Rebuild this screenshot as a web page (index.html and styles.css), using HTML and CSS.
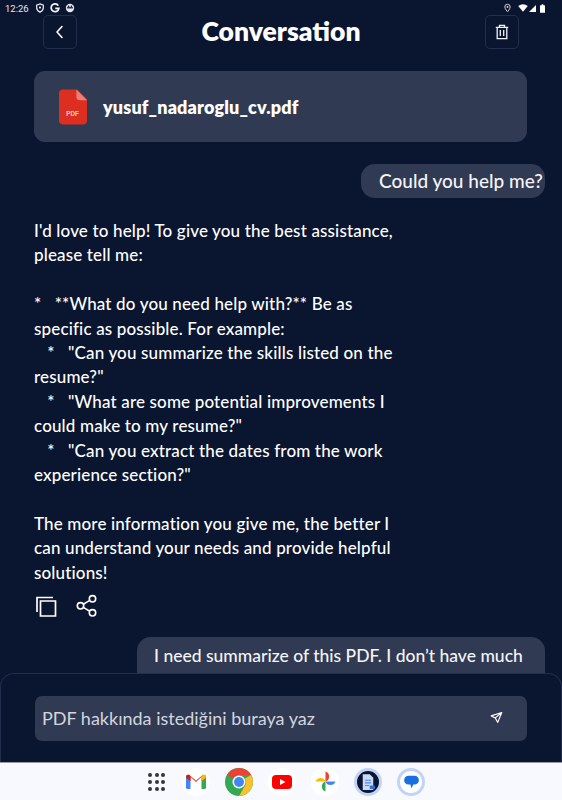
FILE: index.html
```html
<!DOCTYPE html>
<html lang="en">
<head>
  <meta charset="UTF-8" />
  <meta name="viewport" content="width=device-width, initial-scale=1.0" />
  <title>Conversation</title>
  <link rel="stylesheet" href="styles.css">
</head>
<body>
  <div class="app">
    <div class="status-bar">
      <div class="status-left">
        <span class="clock">12:26</span>
        <svg class="status-icon" viewBox="0 0 12 12"><path d="M6 1l4 1.500v3.200c0 2.400-1.700 4-4 5.300-2.300-1.300-4-2.900-4-5.300V2.500z" fill="none" stroke="#e6e8ee" stroke-width="1.500"/><circle cx="6" cy="5.500" r="1.300" fill="#e6e8ee"/></svg>
        <svg class="status-icon" viewBox="0 0 12 12"><path d="M10 3.100A4.700 4.700 0 1 0 10.700 6.500H6.300" fill="none" stroke="#f2f3f6" stroke-width="2"/></svg>
        <svg class="status-icon" viewBox="0 0 12 12"><circle cx="6" cy="6" r="5" fill="#e6e8ee"/><path d="M2.500 5h7v1.500h-7z" fill="#0a1530"/><circle cx="4.300" cy="4" r="1" fill="#0a1530"/><circle cx="7.700" cy="4" r="1" fill="#0a1530"/></svg>
      </div>
      <div class="status-right">
        <svg class="status-pin" viewBox="0 0 12 12"><path d="M6 1a3.600 3.600 0 0 1 3.600 3.600C9.600 7 6 11 6 11S2.400 7 2.400 4.600A3.600 3.600 0 0 1 6 1z" fill="none" stroke="#e6e8ee" stroke-width="1.200"/><circle cx="6" cy="4.600" r="1.200" fill="#e6e8ee"/></svg>
        <svg class="wifi" viewBox="0 0 12 10"><path d="M0 2.500Q6-2 12 2.500L6 9.800z" fill="#fff"/></svg>
        <svg class="signal" viewBox="0 0 9 9"><path d="M9 0v9H0z" fill="#fff"/></svg>
        <svg class="battery" viewBox="0 0 6 10"><path d="M2 0h2v1h1.200q.8 0 .8.800V10H0V1.800Q0 1 .8 1H2z" fill="#fff"/></svg>
      </div>
    </div>

    <header class="top-bar">
      <button class="icon-btn">
        <svg width="16" height="16" viewBox="0 0 16 16"><path d="M10 2.500L5 8l5 5.500" fill="none" stroke="#fff" stroke-width="1.600" stroke-linecap="round" stroke-linejoin="round"/></svg>
      </button>
      <h1>Conversation</h1>
      <button class="icon-btn">
        <svg width="16" height="16" viewBox="0 0 16 16"><path d="M1.800 3.300h12.400M5.500 3V1.300h5V3M3.200 3.300v11.400h9.600V3.300M6.300 6v6M9.700 6v6" fill="none" stroke="#f2f3f6" stroke-width="1.300"/></svg>
      </button>
    </header>

    <main class="chat">
      <div class="file-card">
        <svg class="pdf-icon" width="28" height="36" viewBox="0 0 29 36">
          <path d="M4 0h15l10 10v22a4 4 0 0 1-4 4H4a4 4 0 0 1-4-4V4a4 4 0 0 1 4-4z" fill="#dc2f22"/>
          <path d="M18 0l11 11h-7a4 4 0 0 1-4-4z" fill="#ec7f76"/>
          <text x="14" y="27" text-anchor="middle" class="pdf-label">PDF</text>
        </svg>
        <span class="file-name">yusuf_nadaroglu_cv.pdf</span>
      </div>

      <div class="bubble bubble-short">Could you help me?</div>

      <div class="reply">
        <p>I'd love to help! To give you the best assistance,<br>please tell me:</p>
        <p>*&nbsp;&nbsp;&nbsp;**What do you need help with?** Be as<br>specific as possible. For example:<br>&nbsp;&nbsp;&nbsp;*&nbsp;&nbsp;&nbsp;"Can you summarize the skills listed on the<br>resume?"<br>&nbsp;&nbsp;&nbsp;*&nbsp;&nbsp;&nbsp;"What are some potential improvements I<br>could make to my resume?"<br>&nbsp;&nbsp;&nbsp;*&nbsp;&nbsp;&nbsp;"Can you extract the dates from the work<br>experience section?"</p>
        <p>The more information you give me, the better I<br>can understand your needs and provide helpful<br>solutions!</p>
      </div>

      <div class="reply-actions">
        <svg width="24" height="24" viewBox="0 0 24 24"><path d="M3 18V3.500h16M6.500 7h15v15h-15z" fill="none" stroke="#fff" stroke-width="1.700"/></svg>
        <svg width="22" height="24" viewBox="0 0 22 24"><g fill="none" stroke="#fff" stroke-width="1.600"><circle cx="16.500" cy="4.800" r="3.200"/><circle cx="16.500" cy="18.800" r="3.200"/><circle cx="4.500" cy="11.800" r="3.200"/><path d="M7.300 10.200l6.500-3.800M7.300 13.400l6.500 3.800"/></g></svg>
      </div>

      <div class="bubble bubble-long">I need summarize of this PDF. I don’t have much</div>
    </main>

    <section class="composer">
      <div class="composer-input">
        <span class="placeholder">PDF hakkında istediğini buraya yaz</span>
        <svg width="13" height="13" viewBox="0 0 16 16"><path d="M14.500 1.800L1.500 6l5 2.500 3 5.500zM14.500 1.800L6.500 8.500" fill="none" stroke="#fff" stroke-width="1.400" stroke-linejoin="round"/></svg>
      </div>
    </section>

    <nav class="dock">
      <div class="apps-grid">
        <i></i><i></i><i></i><i></i><i></i><i></i><i></i><i></i><i></i>
      </div>
      <div class="dock-app">
        <svg width="20" height="15" viewBox="0 0 20 15">
          <path d="M0 3v10.500Q0 15 1.500 15H4.500V6.500z" fill="#4285f4"/>
          <path d="M20 3v10.500Q20 15 18.500 15H15.500V6.500z" fill="#34a853"/>
          <path d="M0 3.500Q0 0 3 .8L4.500 2 10 6.500 15.500 2 17 .8Q20 0 20 3.500L15.500 7V3L10 8 4.500 3V7z" fill="#ea4335"/>
          <path d="M15.500 2L17 .8Q20 0 20 3.500L15.500 7z" fill="#fbbc04"/>
          <path d="M0 3.500Q0 0 3 .8L4.500 2V7z" fill="#c5221f"/>
        </svg>
      </div>
      <svg class="chrome" width="28" height="28" viewBox="0 0 28 28">
        <circle cx="14" cy="14" r="14" fill="#34a853"/>
        <path d="M14 0a14 14 0 0 1 12.100 7H14a7 7 0 0 0-6.100 3.500L1.900 7A14 14 0 0 1 14 0z" fill="#ea4335"/>
        <path d="M26.100 7A14 14 0 0 1 14 28l6.100-10.500A7 7 0 0 0 20 10.500z" fill="#fbc02d"/>
        <circle cx="14" cy="14" r="6.500" fill="#fff"/>
        <circle cx="14" cy="14" r="5" fill="#4285f4"/>
      </svg>
      <div class="dock-app">
        <svg width="20" height="14" viewBox="0 0 20 14"><rect width="20" height="14" rx="4" fill="#f00"/><path d="M8 4l5.500 3L8 10z" fill="#fff"/></svg>
      </div>
      <div class="dock-app">
        <svg width="21" height="23" viewBox="0 0 20 22">
          <path d="M10 11V1.500a5 5 0 0 1 0 9.500z" fill="#ea4335"/>
          <path d="M10 11h9.500a5 5 0 0 1-9.500 0z" fill="#4285f4"/>
          <path d="M10 11v9.500a5 5 0 0 1 0-9.500z" fill="#34a853"/>
          <path d="M10 11H.500a5 5 0 0 1 9.500 0z" fill="#fbbc04"/>
        </svg>
      </div>
      <div class="dock-app dock-app-ring dock-app-dark">
        <svg width="14" height="18" viewBox="0 0 16 20">
          <path d="M2 1h8l4 4v14H2z" fill="#c9d9f8"/>
          <path d="M4.500 8h7M4.500 11h7M4.500 14h5" stroke="#5a87d8" stroke-width="1.200"/>
          <rect x="10" y="14" width="6" height="4" rx="1" fill="#2f6fe0"/>
        </svg>
      </div>
      <div class="dock-app dock-app-ring">
        <svg width="15" height="14" viewBox="0 0 20 19"><path d="M6 1h8a6 6 0 0 1 0 12h-1.500L10 18l-1.500-5H6A6 6 0 0 1 6 1z" fill="#1a6fe0"/></svg>
      </div>
    </nav>
  </div>
</body>
</html>
```
FILE: styles.css
```css
* {
  margin: 0;
  padding: 0;
  box-sizing: border-box;
}

html, body {
  height: 100%;
  overflow: hidden;
}

body {
  font-family: 'Lato', 'Noto Sans', sans-serif;
  background: #0a1530;
  color: #fff;
}

.app {
  height: 800px;
  display: flex;
  flex-direction: column;
}

/* Status bar */
.status-bar {
  height: 15px;
  padding: 1px 17px 0 5px;
  display: flex;
  justify-content: space-between;
  align-items: center;
  flex-shrink: 0;
}

.status-left, .status-right {
  display: flex;
  align-items: center;
}

.status-left {
  gap: 5px;
}

.status-right {
  gap: 3px;
}

.clock {
  font-family: 'Roboto', sans-serif;
  font-size: 9.5px;
  color: #e6e8ee;
  margin-right: 1px;
}

.status-icon {
  width: 10px;
  height: 10px;
}

.status-pin {
  width: 9px;
  height: 10px;
}

.wifi {
  width: 10px;
  height: 8px;
  margin-left: 3px;
}

.signal {
  width: 7px;
  height: 7px;
  margin-left: -2px;
}

.battery {
  width: 5px;
  height: 9px;
  margin-left: 1px;
}

/* Top bar */
.top-bar {
  height: 34px;
  margin: 0 43px;
  display: flex;
  justify-content: space-between;
  align-items: center;
  flex-shrink: 0;
}

.icon-btn {
  width: 34px;
  height: 34px;
  background: transparent;
  border: 1px solid #232e4d;
  border-radius: 5px;
  display: flex;
  align-items: center;
  justify-content: center;
}

.top-bar h1 {
  font-size: 26.5px;
  font-weight: 800;
  color: #fff;
  padding-bottom: 2px;
}

/* Chat */
.chat {
  flex: 1;
  overflow: hidden;
  padding: 22px 17px 0 34px;
  display: flex;
  flex-direction: column;
  align-items: flex-start;
}

.file-card {
  width: 493px;
  height: 71px;
  background: #313a53;
  border-radius: 11px;
  padding-left: 25px;
  display: flex;
  align-items: center;
  gap: 16px;
  flex-shrink: 0;
}

.pdf-label {
  font-family: 'Liberation Sans', sans-serif;
  font-size: 6.5px;
  font-weight: 700;
  fill: #f6cfcb;
}

.file-name {
  font-size: 18px;
  font-weight: 800;
  letter-spacing: 0.15px;
  padding-top: 1px;
}

.bubble {
  background: #313a53;
  border-radius: 14px;
  padding: 5px 0 5px 17px;
  font-size: 17.5px;
  font-weight: 500;
  line-height: 24px;
  white-space: nowrap;
  align-self: flex-end;
  flex-shrink: 0;
  color: #f4f5f8;
}

.bubble-short {
  margin-top: 22px;
  width: 184px;
  height: 34px;
  padding-left: 18px;
  font-size: 19px;
}

.bubble-long {
  margin-top: 19px;
  width: 408px;
  height: 60px;
  padding-top: 7px;
}

.reply {
  margin-top: 21px;
  width: 380px;
  font-size: 17px;
  font-weight: 500;
  letter-spacing: 0.15px;
  line-height: 24.4px;
  white-space: nowrap;
  flex-shrink: 0;
}

.reply p + p {
  margin-top: 24.4px;
}

.reply-actions {
  margin-top: 9px;
  display: flex;
  align-items: center;
  gap: 18px;
  flex-shrink: 0;
}

/* Composer */
.composer {
  height: 89px;
  background: #0a1530;
  border: 1px solid #232e4d;
  border-bottom: none;
  border-radius: 14px 14px 0 0;
  padding: 22px 34px 0 34px;
  flex-shrink: 0;
}

.composer-input {
  height: 45px;
  background: #313a53;
  border-radius: 7px;
  padding: 0 24px 2px 7px;
  display: flex;
  align-items: center;
  justify-content: space-between;
}

.placeholder {
  font-size: 18px;
  color: #d3d6de;
}

/* Android dock */
.dock {
  height: 38px;
  background: #f8f9fe;
  border-top: 1px solid #9a9ca3;
  padding-left: 148px;
  display: flex;
  align-items: center;
  gap: 15px;
  flex-shrink: 0;
}

.apps-grid {
  width: 17px;
  display: grid;
  grid-template-columns: repeat(3, 4px);
  gap: 3px 2.5px;
  margin-right: 2px;
}

.apps-grid i {
  width: 4px;
  height: 4px;
  border-radius: 50%;
  background: #33363c;
}

.dock-app {
  width: 28px;
  height: 28px;
  border-radius: 50%;
  background: #fff;
  display: flex;
  align-items: center;
  justify-content: center;
  flex-shrink: 0;
}

.chrome {
  flex-shrink: 0;
}

.dock-app-ring {
  border: 3px solid #c2d4f5;
}

.dock-app-dark {
  background: #0a1530;
}
```
